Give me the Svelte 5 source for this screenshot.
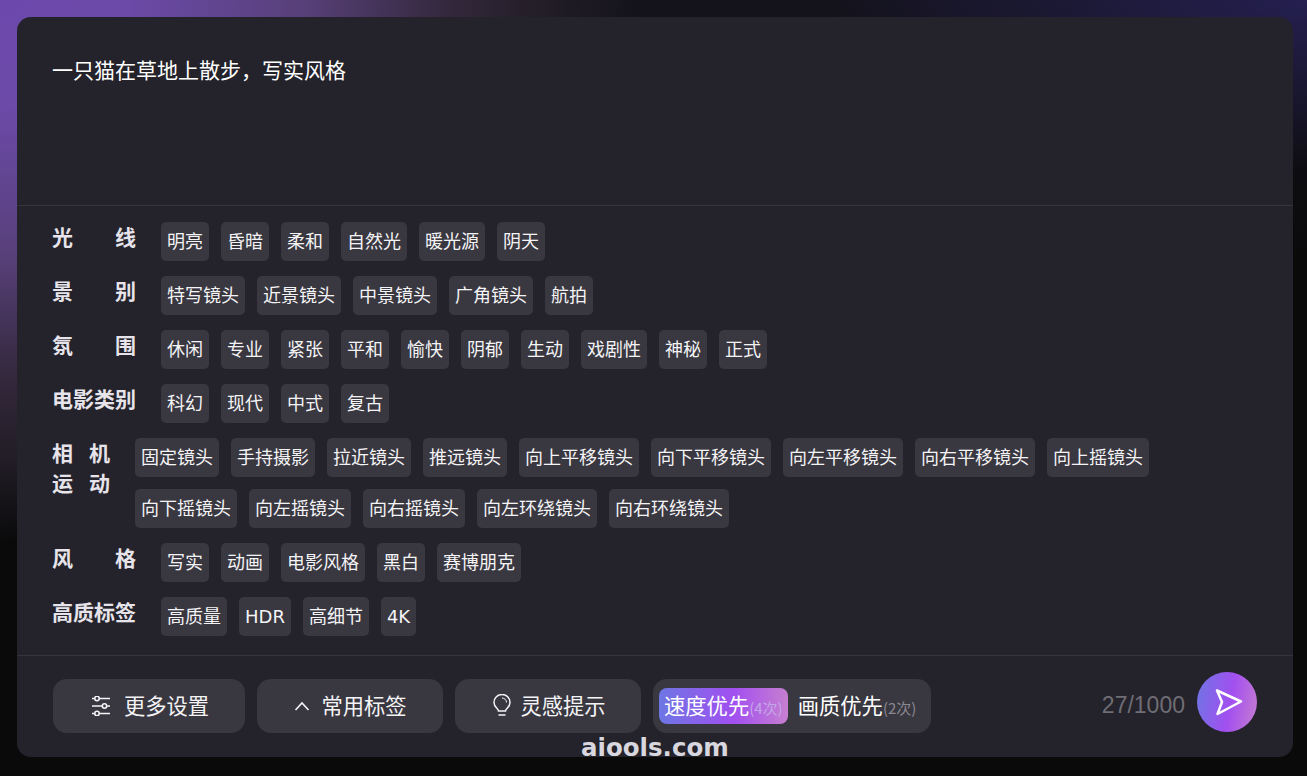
<script lang="ts">
  interface TagRow {
    label: string[];
    tags: string[];
    narrow?: boolean;
  }

  const rows: TagRow[] = [
    { label: ['光', '线'], tags: ['明亮', '昏暗', '柔和', '自然光', '暖光源', '阴天'] },
    { label: ['景', '别'], tags: ['特写镜头', '近景镜头', '中景镜头', '广角镜头', '航拍'] },
    { label: ['氛', '围'], tags: ['休闲', '专业', '紧张', '平和', '愉快', '阴郁', '生动', '戏剧性', '神秘', '正式'] },
    { label: ['电影类别'], tags: ['科幻', '现代', '中式', '复古'] },
    {
      label: ['相', '机', '运', '动'],
      narrow: true,
      tags: [
        '固定镜头', '手持摄影', '拉近镜头', '推远镜头', '向上平移镜头', '向下平移镜头', '向左平移镜头', '向右平移镜头', '向上摇镜头',
        '向下摇镜头', '向左摇镜头', '向右摇镜头', '向左环绕镜头', '向右环绕镜头'
      ]
    },
    { label: ['风', '格'], tags: ['写实', '动画', '电影风格', '黑白', '赛博朋克'] },
    { label: ['高质标签'], tags: ['高质量', 'HDR', '高细节', '4K'] }
  ];
</script>

<div class="page">
  <div class="panel">
    <div class="prompt">一只猫在草地上散步，写实风格</div>

    <div class="options">
      {#each rows as row}
        <div class="row" class:narrow={row.narrow}>
          <div class="label">
            {#each row.label as part}<span>{part}</span>{/each}
          </div>
          <div class="tags">
            {#each row.tags as tag}<span class="tag">{tag}</span>{/each}
          </div>
        </div>
      {/each}
    </div>

    <div class="footer">
      <button class="btn s1">
        <svg width="18" height="20" viewBox="0 0 18 20" fill="none" stroke="currentColor" stroke-width="1.6">
          <path d="M0 2.500h2.500M7.500 2.500H18M0 10h10M15 10h3M0 17.500h2.500M7.500 17.500H18" />
          <circle cx="5" cy="2.500" r="2.200" />
          <circle cx="12.500" cy="10" r="2.200" />
          <circle cx="5" cy="17.500" r="2.200" />
        </svg>
        <span>更多设置</span>
      </button>
      <button class="btn s2">
        <svg width="16" height="16" viewBox="0 0 16 16" fill="none" stroke="currentColor" stroke-width="1.600">
          <path d="M1.500 12 8 5l6.500 7" />
        </svg>
        <span>常用标签</span>
      </button>
      <button class="btn s3">
        <svg width="20" height="24" viewBox="0 0 20 24" fill="none" stroke="currentColor" stroke-width="1.500">
          <path d="M6.500 17c0-2.500-4.500-3.500-4.500-8.500a8 8 0 0 1 16 0c0 5-4.500 6-4.500 8.500z" />
          <path d="M6.500 21h7" />
          <path d="M10 4a4.500 4.500 0 0 1 4.500 4.500" stroke-width="1" />
        </svg>
        <span>灵感提示</span>
      </button>
      <div class="mode">
        <span class="opt active">速度优先<small>(4次)</small></span>
        <span class="opt">画质优先<small>(2次)</small></span>
      </div>

      <span class="count">27/1000</span>
      <button class="send" aria-label="发送">
        <svg width="32" height="32" viewBox="0 0 32 32" fill="none" stroke="#fff" stroke-width="2.500" stroke-linejoin="round">
          <path d="M6 4.500 30 15.500 6.500 28 11 16z" />
        </svg>
      </button>
    </div>
  </div>
  <div class="mark">aiools.com</div>
</div>

<style>
  :global(body) {
    background: #0a0a0b;
  }

  .page {
    position: relative;
    box-sizing: border-box;
    height: 776px;
    padding: 17px 14px 19px 17px;
    overflow: hidden;
    font-family: "Noto Sans CJK SC", "Liberation Sans", sans-serif;
    background:
      radial-gradient(ellipse 640px 540px at 0 0, #6c48ac 0%, #6b4aa8 20%, #58407a 47%, #33283c 70%, #221d26 85%, rgba(26, 26, 28, 0) 100%),
      radial-gradient(ellipse 480px 170px at 100% 0, #241f4f 0%, rgba(30, 26, 64, 0) 100%),
      linear-gradient(#14131c 0, #0a0a0b 260px);
  }

  .panel {
    display: flex;
    flex-direction: column;
    height: 100%;
    border-radius: 14px;
    background: #24222a;
    color: #fff;
  }

  .prompt {
    height: 189px;
    box-sizing: border-box;
    padding: 36px 35px 0;
    font-size: 21px;
    line-height: 32px;
    border-bottom: 1px solid #36343c;
  }

  .options {
    flex: 1;
    padding: 16px 35px 0;
  }

  .row {
    display: flex;
    gap: 25px;
    margin-bottom: 15px;
  }

  .label {
    flex: none;
    width: 84px;
    display: flex;
    justify-content: space-between;
    align-content: flex-start;
    row-gap: 2px;
    font-size: 21px;
    font-weight: 700;
    line-height: 28px;
    color: #e6e4ea;
  }

  .narrow .label {
    width: 58px;
    flex-wrap: wrap;
  }

  .narrow .label span {
    width: 21px;
  }

  .tags {
    display: flex;
    flex-wrap: wrap;
    gap: 12px;
  }

  .tag {
    height: 39px;
    padding: 0 6px;
    border-radius: 5px;
    background: #393740;
    font-family: "DejaVu Sans", "Noto Sans CJK SC", sans-serif;
    font-size: 18px;
    line-height: 39px;
    color: #f4f4f6;
  }

  .footer {
    display: flex;
    align-items: center;
    gap: 12px;
    height: 102px;
    padding: 0 36px 2px;
    border-top: 1px solid #36343c;
    box-sizing: border-box;
  }

  .btn {
    display: flex;
    align-items: center;
    justify-content: center;
    gap: 10px;
    height: 54px;
    padding: 0 0 2px;
    border: 0;
    border-radius: 14px;
    background: #393740;
    color: #f4f4f6;
    font: inherit;
    font-size: 21.300px;
  }

  .btn svg {
    flex: none;
    margin-top: 2px;
  }

  .s1 { width: 192px; gap: 14px; padding-left: 3px; }
  .s2 { width: 186px; gap: 11px; padding-left: 1px; }
  .s3 { width: 186px; gap: 8px; padding-left: 2px; }

  .mode {
    display: flex;
    align-items: center;
    gap: 10px;
    height: 54px;
    padding: 0 15px 0 6px;
    border-radius: 14px;
    background: #393740;
    font-size: 21.300px;
  }

  .opt {
    height: 36px;
    line-height: 34px;
    white-space: nowrap;
  }

  .opt small {
    font-size: 15px;
    color: #8b8992;
  }

  .opt.active {
    padding: 0 5px;
    border-radius: 8px;
    background: linear-gradient(90deg, #6d76e4 0%, #a24ff0 58%, #c77fd0 100%);
  }

  .opt.active small {
    color: #c3a6e6;
  }

  .count {
    margin-left: auto;
    font-family: "Liberation Sans", sans-serif;
    font-size: 23px;
    color: #6f6d75;
  }

  .send {
    display: flex;
    align-items: center;
    justify-content: center;
    width: 60px;
    height: 60px;
    margin-top: -7px;
    padding: 0;
    border: 0;
    border-radius: 50%;
    background: linear-gradient(100deg, #6d76e4 0%, #a24ff0 55%, #c77fd0 100%);
  }

  .mark {
    position: absolute;
    left: 581px;
    top: 733px;
    font-family: "DejaVu Sans", sans-serif;
    font-size: 24.500px;
    font-weight: 700;
    line-height: 30px;
    color: #d8d6de;
  }
</style>
